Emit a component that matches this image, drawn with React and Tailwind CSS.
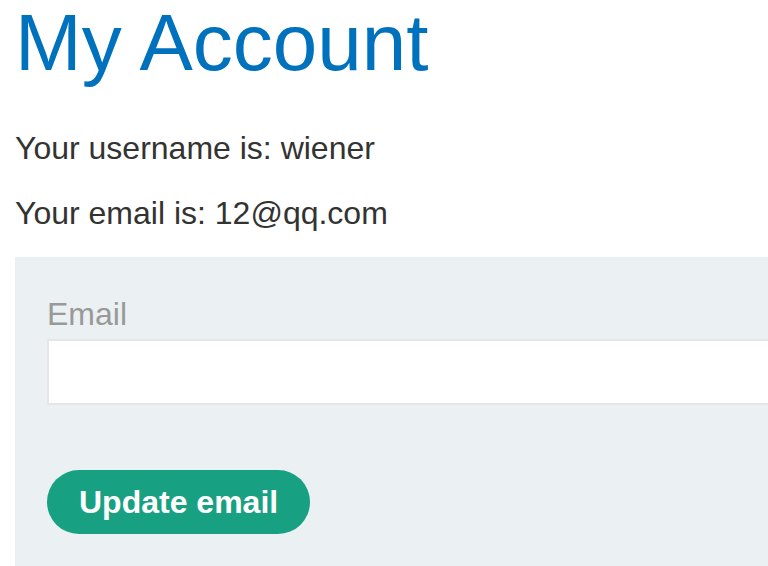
import React from "react";

export default function App() {
  return (
    <div className="h-[566px] w-full overflow-hidden bg-white pl-[15px] font-['Liberation_Sans',Arial,sans-serif] text-[#333332]">
      <h1 className="pt-[3px] text-[80px] leading-[80px] font-normal text-[#0071bc]">
        My Account
      </h1>

      <p className="mt-[47px] text-[32px] leading-[36px]">Your username is: wiener</p>
      <p className="mt-[29px] text-[32px] leading-[36px]">Your email is: 12@qq.com</p>

      {/* change email form */}
      <form
        className="mt-[26px] w-[820px] bg-[#ebf0f2] px-[32px] pt-[39px] pb-[32px]"
        onSubmit={(e) => e.preventDefault()}
      >
        <label className="block text-[32px] leading-[36px] text-[#999999]">Email</label>
        <input
          type="email"
          name="email"
          className="mt-[7px] block h-[66px] w-full border-2 border-[#e6e6e6] bg-white px-3 text-[32px] outline-none"
        />
        <button
          type="submit"
          className="mt-[65px] h-[64px] rounded-full bg-[#18a082] px-[32px] text-[32px] leading-[36px] font-bold text-white"
        >
          Update email
        </button>
      </form>
    </div>
  );
}
